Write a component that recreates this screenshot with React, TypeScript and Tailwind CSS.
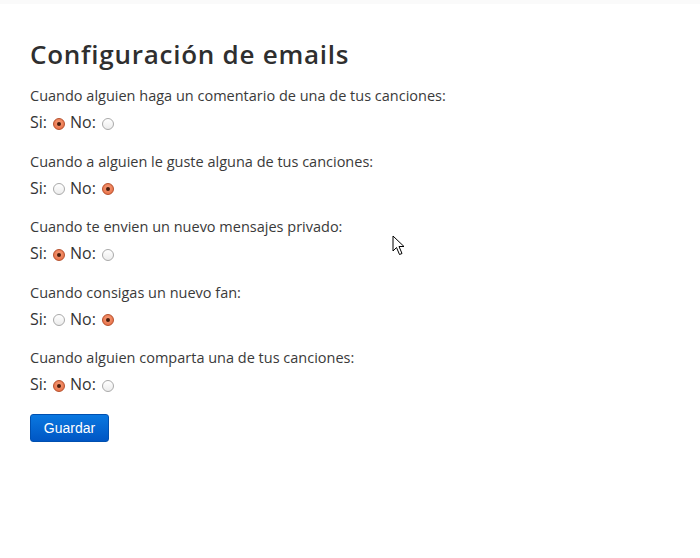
const settings = [
  { label: "Cuando alguien haga un comentario de una de tus canciones:", yes: true },
  { label: "Cuando a alguien le guste alguna de tus canciones:", yes: false },
  { label: "Cuando te envien un nuevo mensajes privado:", yes: true },
  { label: "Cuando consigas un nuevo fan:", yes: false },
  { label: "Cuando alguien comparta una de tus canciones:", yes: true },
];

function Radio({ checked }: { checked: boolean }) {
  if (checked) {
    return (
      <span className="inline-flex h-[12px] w-[12px] items-center justify-center rounded-full border border-[#b6502c] bg-[radial-gradient(circle_at_50%_40%,#f7a07c,#e4643a)] align-middle">
        <span className="h-[4px] w-[4px] rounded-full bg-[#4a1d0c]" />
      </span>
    );
  }
  return (
    <span className="inline-block h-[12px] w-[12px] rounded-full border border-[#a9a9a9] bg-[linear-gradient(#ffffff,#ececec)] align-middle" />
  );
}

function Cursor() {
  return (
    <svg className="absolute left-[392px] top-[235px]" width="14" height="22" viewBox="0 0 14 22">
      <path d="M1 1 L1 16 L4.5 12.5 L7.5 19.5 L10 18.5 L7 11.5 L12 11.5 Z" fill="#fff" stroke="#000" strokeWidth="1" strokeLinejoin="round" />
    </svg>
  );
}

export default function App() {
  return (
    <div className="relative h-[558px] w-[700px] bg-white font-['Open_Sans',sans-serif] text-[#333]">
      <div className="h-[4px] bg-[#fafafa]" />
      <div className="px-[30px] pt-[34px]">
        <h1 className="text-[26px] font-semibold leading-[32px] tracking-[0.75px] text-[#2f2f2f]">
          Configuración de emails
        </h1>
        <div className="mt-[16px] flex flex-col gap-[18.5px]">
          {settings.map((s) => (
            <div key={s.label}>
              <p className="text-[14.5px] leading-[20px] text-[#3a3a3a]">{s.label}</p>
              <div className="mt-[5px] flex items-center text-[16px] leading-[22px] text-[#333]">
                <span>Si:</span>
                <span className="ml-[6px] mr-[5px] inline-flex pt-[3px]"><Radio checked={s.yes} /></span>
                <span>No:</span>
                <span className="ml-[6px] inline-flex pt-[3px]"><Radio checked={!s.yes} /></span>
              </div>
            </div>
          ))}
        </div>
        <button className="mt-[19px] h-[28px] w-[79px] rounded-[3px] border border-[#0050b0] bg-[linear-gradient(#0a78e0,#0056c4)] font-['Liberation_Sans',sans-serif] text-[14px] text-white">
          Guardar
        </button>
      </div>
      <Cursor />
    </div>
  );
}
